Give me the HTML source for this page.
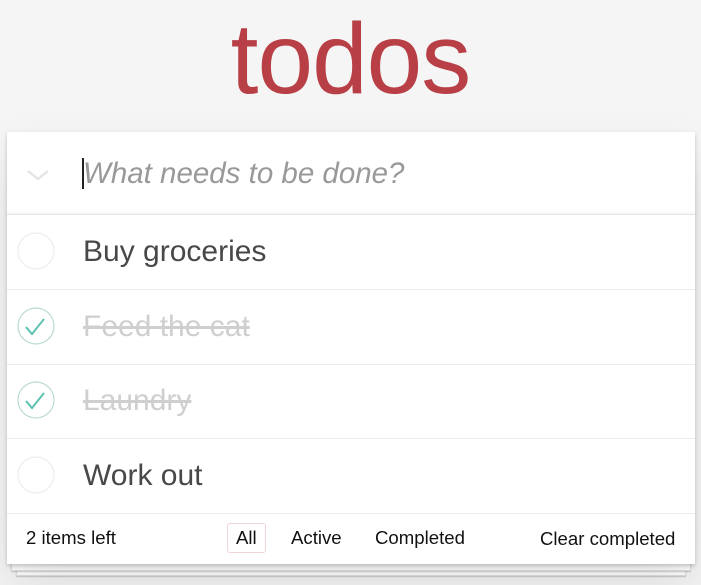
<!DOCTYPE html>
<html><head><style>
body{margin:0;background:#f5f5f5;width:701px;height:585px;overflow:hidden;font-family:"Liberation Sans",Arial,sans-serif;position:relative}
h1{position:absolute;top:0;left:0;width:701px;margin:0;text-align:center;font-weight:200;font-size:100px;color:#b83f45;line-height:118px;letter-spacing:-1px}
.stack{position:absolute;background:#fff;border:1px solid #e0e0e0;box-shadow:0 1px 1px rgba(0,0,0,.2)}
.card{position:absolute;left:7px;top:132px;width:688px;height:432px;background:#fff;box-shadow:0 2px 4px rgba(0,0,0,.2),0 25px 50px rgba(0,0,0,.1)}
.hdr{position:absolute;left:0;top:0;width:688px;height:82px;border-bottom:1px solid #e6e6e6;box-shadow:inset 0 -2px 1px rgba(0,0,0,.03)}
.ph{position:absolute;left:76px;top:25px;font-size:29.5px;font-style:italic;color:#999;font-weight:300}
.caret{position:absolute;left:75px;top:26px;width:2px;height:31px;background:#222}
.item{position:absolute;left:0;width:688px;height:74px;border-bottom:1px solid #ededed}
.item svg{position:absolute;left:9px;top:17px}
.item span{position:absolute;left:76px;top:20px;font-size:30px;color:#484848}
.item.done span{color:#cfcfcf;text-decoration:line-through}
.ft{position:absolute;left:0;top:382px;width:688px;height:50px;font-size:18.6px;color:#111}
.ft div{position:absolute;top:13px}
</style></head><body>
<h1>todos</h1>
<div class="stack" style="left:16px;top:566px;width:668px;height:8px"></div>
<div class="stack" style="left:11px;top:561px;width:678px;height:8px"></div>
<div class="card">
<div class="hdr">
<svg style="position:absolute;left:19px;top:36px" width="24" height="14"><path d="M2 3 L12 11 L22 3" stroke="#e6e6e6" stroke-width="2.5" fill="none"/></svg>
<div class="caret"></div>
<div class="ph">What needs to be done?</div>
</div>
<div class="item" style="top:83px"><svg width="40" height="40"><circle cx="20" cy="19" r="18" fill="none" stroke="#ededed" stroke-width="1.2"/></svg><span>Buy groceries</span></div>
<div class="item done" style="top:158px"><svg width="40" height="40"><circle cx="20" cy="19" r="18" fill="none" stroke="#bddad5" stroke-width="1.2"/><path d="M10 20 L16 27 L28 12" stroke="#5dc2af" stroke-width="2" fill="none"/></svg><span>Feed the cat</span></div>
<div class="item done" style="top:232px"><svg width="40" height="40"><circle cx="20" cy="19" r="18" fill="none" stroke="#bddad5" stroke-width="1.2"/><path d="M10 20 L16 27 L28 12" stroke="#5dc2af" stroke-width="2" fill="none"/></svg><span>Laundry</span></div>
<div class="item" style="top:307px"><svg width="40" height="40"><circle cx="20" cy="19" r="18" fill="none" stroke="#ededed" stroke-width="1.2"/></svg><span>Work out</span></div>
<div class="ft">
<div style="left:19px">2 items left</div>
<div style="left:220px;top:9px;border:1px solid #efd5d5;border-radius:3px;padding:3px 8px">All</div>
<div style="left:284px">Active</div>
<div style="left:368px">Completed</div>
<div style="left:533px;top:14px">Clear completed</div>
</div>
</div>
</body></html>
